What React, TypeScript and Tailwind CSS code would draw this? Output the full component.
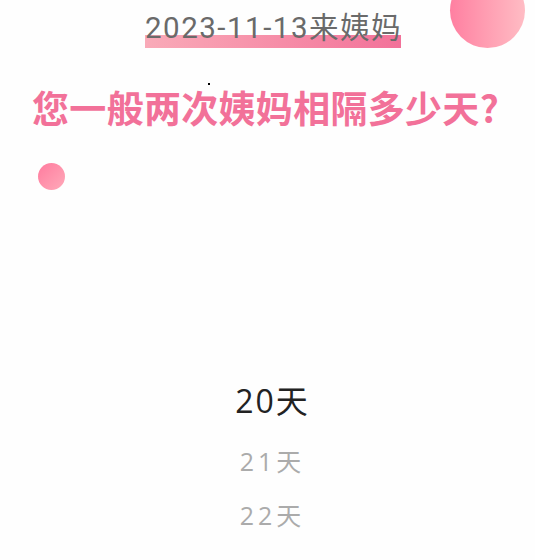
import React from 'react';

const cjk = { fontFamily: 'Roboto, "Noto Sans CJK SC", sans-serif' };
const headFont = { fontFamily: '"Noto Sans CJK SC", sans-serif' };
const pickerFont = { fontFamily: '"Open Sans", "Noto Sans CJK SC", sans-serif' };

// Wheel picker rows below the current selection
const days = [21, 22, 23];

function App() {
  return (
    <div className="relative w-[535px] h-[560px] overflow-hidden bg-[#fefefe]">
      {/* decorative bubbles */}
      <div className="absolute left-[450px] top-[-27px] w-[75px] h-[75px] rounded-full bg-gradient-to-r from-[#ff7fa1] to-[#ffbcc4]" />
      <div className="absolute left-[38px] top-[163px] w-[27px] h-[27px] rounded-full bg-gradient-to-br from-[#ff7a9e] to-[#ffa9b9]" />
      <div className="absolute left-[208px] top-[83px] w-[2px] h-[2px] bg-black" />

      <div className="flex flex-col items-center pt-[8px]" style={cjk}>
        <div className="relative ml-[12px]">
          <div className="absolute left-0 right-[1px] top-[27px] h-[13px] bg-gradient-to-r from-[#f9aab8] to-[#f27199]" />
          <span className="relative text-[29.5px] leading-[40px] text-[#6a6a6a] tracking-[1.5px]">2023-11-13来姨妈</span>
        </div>
        <h1 className="mt-[37px] mr-[4px] text-[37px] leading-[44px] font-bold text-[#f27199] tracking-[0.3px]" style={headFont}>
          您一般两次姨妈相隔多少天?
        </h1>
      </div>

      <div className="flex flex-col items-center pt-[252px] ml-[10px]" style={pickerFont}>
        <div className="text-[32px] leading-[40px] text-[#222] tracking-[2px]">20天</div>
        <div className="flex flex-col items-center mt-[20px] gap-[14px]">
          {days.map((d) => (
            <div key={d} className="text-[25px] leading-[40px] text-[#ababab] tracking-[4px]">{d}天</div>
          ))}
        </div>
      </div>
    </div>
  );
}

export default App;
